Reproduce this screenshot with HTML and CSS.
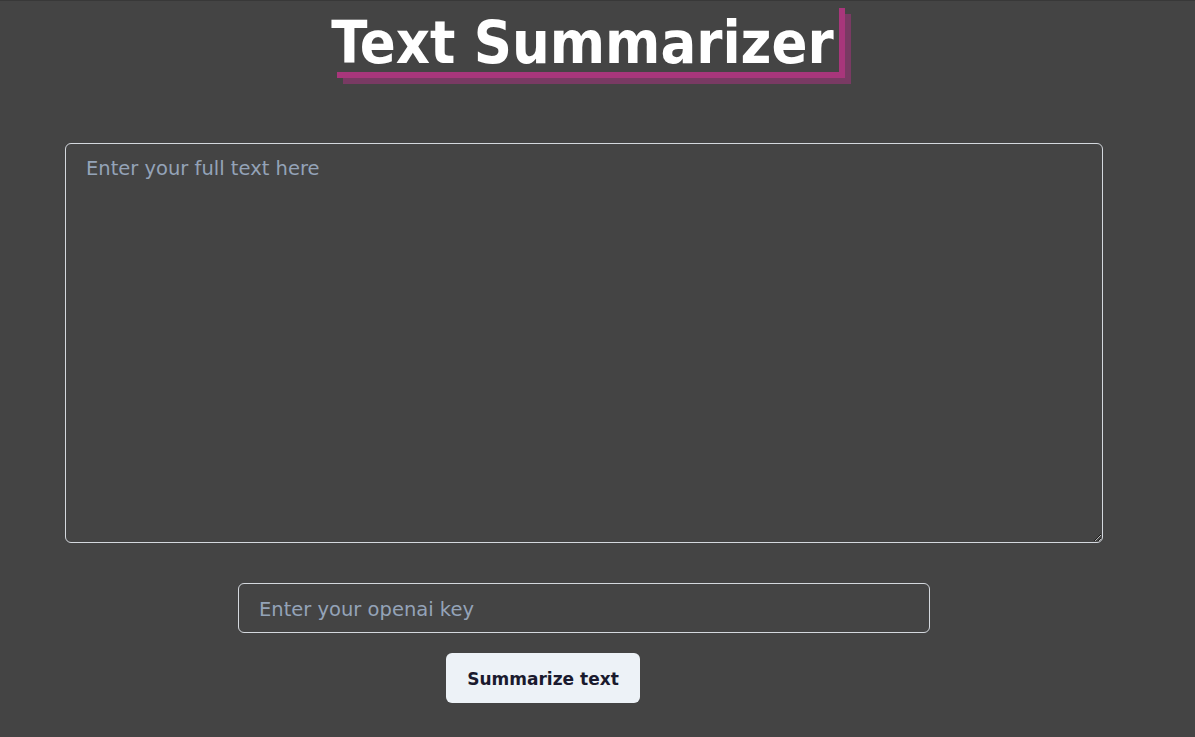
FILE: index.html
```html
<!DOCTYPE html>
<html lang="en">
<head>
<meta charset="utf-8">
<title>Text Summarizer</title>
<link rel="stylesheet" href="styles.css">
</head>
<body>
<main class="page">
  <h1 class="title">Text Summarizer</h1>
  <textarea class="full-text" placeholder="Enter your full text here"></textarea>
  <input class="key-input" type="text" placeholder="Enter your openai key">
  <button class="submit-btn" type="button">Summarize text</button>
</main>
</body>
</html>
```

FILE: styles.css
```css
html, body {
  margin: 0;
  padding: 0;
}

body {
  background: #444444;
  border-top: 1px solid #383838;
  min-height: 736px;
  font-family: "Comic Sans MS", "DejaVu Sans", sans-serif;
  color: #ffffff;
}

.page {
  width: 1168px;
  display: flex;
  flex-direction: column;
  align-items: center;
}

.title {
  box-sizing: border-box;
  margin: 1px 0 0 2px;
  height: 70px;
  padding: 6px 5px 0 0;
  line-height: 70px;
  font-family: "DejaVu Sans Condensed", "DejaVu Sans", sans-serif;
  font-weight: bold;
  font-size: 59px;
  color: #ffffff;
  box-shadow: 6px 6px 0 #a8367b, 12px 12px 0 #793a63;
}

.full-text {
  box-sizing: border-box;
  width: 1038px;
  height: 400px;
  margin-top: 71px;
  padding: 13px 20px;
  background: transparent;
  border: 1px solid #d4d8de;
  border-radius: 6px;
  color: #ffffff;
  font-family: "DejaVu Sans", sans-serif;
  font-size: 19.5px;
  outline: none;
}

.key-input {
  box-sizing: border-box;
  width: 692px;
  height: 50px;
  margin-top: 40px;
  padding: 2px 20px 0 20px;
  background: transparent;
  border: 1px solid #d4d8de;
  border-radius: 6px;
  color: #ffffff;
  font-family: "DejaVu Sans", sans-serif;
  font-size: 19.5px;
  outline: none;
}

.full-text::placeholder,
.key-input::placeholder {
  color: #94a3b8;
  opacity: 1;
}

.submit-btn {
  align-self: flex-start;
  margin: 20px 0 0 446px;
  width: 194px;
  height: 50px;
  padding: 2px 0 0 0;
  background: #edf2f7;
  border: none;
  border-radius: 6px;
  color: #1a1a2e;
  font-family: "DejaVu Sans", sans-serif;
  font-weight: bold;
  font-size: 17px;
  cursor: pointer;
}
```
